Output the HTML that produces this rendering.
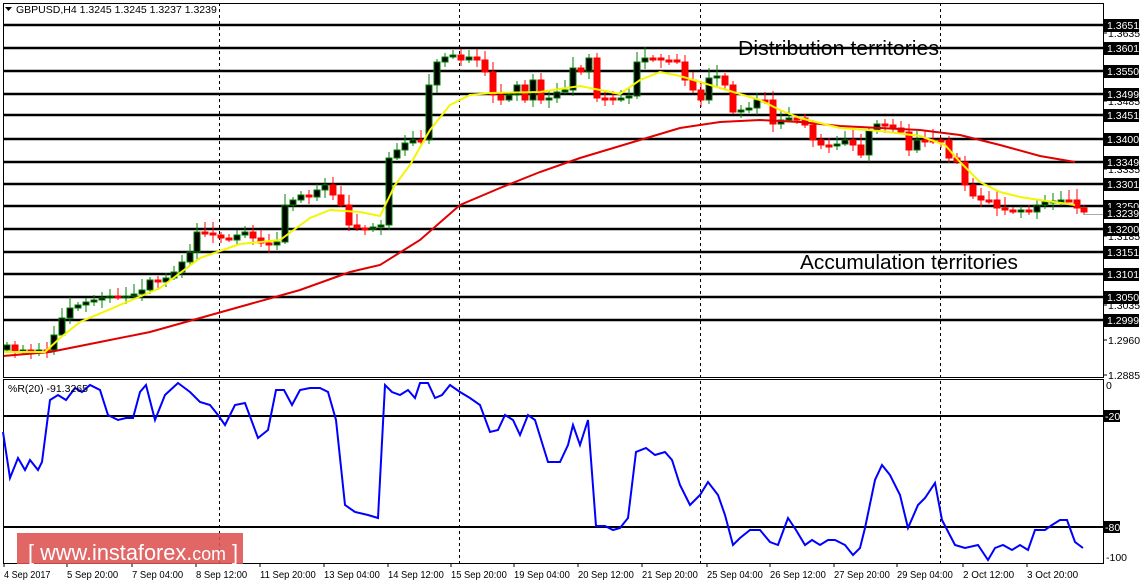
<!DOCTYPE html>
<html><head><meta charset="utf-8"><style>
html,body{margin:0;padding:0;background:#fff;width:1143px;height:585px;overflow:hidden}
svg{display:block}
text{font-family:"Liberation Sans",sans-serif}
</style></head><body>
<svg id="s" width="1143" height="585" xmlns="http://www.w3.org/2000/svg">
<rect width="1143" height="585" fill="#fff"/>
<g id="grid" stroke="#000" stroke-dasharray="3,3" stroke-width="1">
<line x1="219.5" y1="3" x2="219.5" y2="563"/><line x1="459.5" y1="3" x2="459.5" y2="563"/><line x1="700.5" y1="3" x2="700.5" y2="563"/><line x1="940.5" y1="3" x2="940.5" y2="563"/>
</g>
<g id="hl" stroke="#000" stroke-width="2.5"></g>
<g id="cd"></g>
<polyline id="red" fill="none" stroke="#e00000" stroke-width="2" points="3,356 50,352 100,342 150,332 200,318 250,304 300,290 350,272 380,265 420,240 460,205 500,188 540,172 580,158 640,140 680,128 720,122 760,120 800,122 840,126 880,128 920,130 960,135 1000,145 1040,156 1075,162"/>
<polyline id="yel" fill="none" stroke="#f5f500" stroke-width="2" points="3,352 45,352 60,338 80,322 120,305 160,288 200,258 240,244 280,240 310,218 330,210 360,212 380,216 395,185 410,165 430,130 450,105 470,95 490,93 540,92 580,86 600,90 620,94 640,80 660,72 680,76 720,88 760,100 780,110 800,118 840,128 880,131 920,136 945,145 960,162 980,182 1000,192 1020,197 1040,200 1075,205"/>
<line x1="1083" y1="214.5" x2="1103" y2="214.5" stroke="#aaa"/>
<text x="738" y="55" font-size="20.5" textLength="201" lengthAdjust="spacingAndGlyphs">Distribution territories</text>
<text x="800" y="269" font-size="20.5" textLength="218" lengthAdjust="spacingAndGlyphs">Accumulation territories</text>
<text x="16" y="13" font-size="10.5" fill="#000">GBPUSD,H4  1.3245 1.3245 1.3237 1.3239</text>
<path d="M5,7 L12,7 L8.5,11Z" fill="#000"/>
<rect x="3.5" y="3.5" width="1100" height="374" fill="none" stroke="#000"/>
<rect x="3.5" y="379.5" width="1100" height="184" fill="none" stroke="#000"/>
<line x1="3" y1="416" x2="1103" y2="416" stroke="#000" stroke-width="2"/>
<line x1="3" y1="527" x2="1103" y2="527" stroke="#000" stroke-width="2"/>
<polyline id="wr" fill="none" stroke="#0000ff" stroke-width="2" points=""/>
<text x="8" y="392" font-size="10.5">%R(20) -91.3265</text>
<g id="ax" font-size="10.5"></g>
<g id="tx" font-size="10"></g>
<rect x="17" y="533" width="226" height="31" fill="#dd5252" opacity="0.88"/>
<text x="28" y="560" font-size="22" fill="#fff" textLength="210" lengthAdjust="spacingAndGlyphs">[  www.instaforex.<tspan font-size="18">com</tspan> ]</text>
</svg>
<script>
var NS="http://www.w3.org/2000/svg";
function el(p,t,a,tx){var e=document.createElementNS(NS,t);for(var k in a)e.setAttribute(k,a[k]);if(tx!==undefined)e.textContent=tx;p.appendChild(e);return e;}
var hl=document.getElementById('hl'),ax=document.getElementById('ax');
var lv=[[25,"1.3651"],[48,"1.3601"],[71,"1.3550"],[94,"1.3499"],[115,"1.3451"],[139,"1.3400"],[162,"1.3349"],[184,"1.3301"],[206,"1.3250"],[229,"1.3200"],[252,"1.3151"],[274,"1.3101"],[297,"1.3050"],[320,"1.2999"]];
lv.forEach(function(l){el(hl,'line',{x1:3,y1:l[0],x2:1103,y2:l[0]});});
var sm=[[33,"1.3635"],[101,"1.3485"],[169,"1.3335"],[236,"1.3185"],[305,"1.3035"],[340,"1.2960"],[375,"1.2885"]];
sm.forEach(function(l){el(ax,'line',{x1:1103,y1:l[0],x2:1107,y2:l[0],stroke:'#000'});el(ax,'text',{x:1108,y:l[0]+4},l[1]);});
lv.forEach(function(l){el(ax,'rect',{x:1104,y:l[0]-6,width:35,height:13,fill:'#000'});el(ax,'text',{x:1107,y:l[0]+4,fill:'#fff'},l[1]);});
el(ax,'rect',{x:1104,y:208,width:35,height:11,fill:'#000'});el(ax,'text',{x:1107,y:217,fill:'#fff'},"1.3239");
el(ax,'text',{x:1106,y:389},"0");
el(ax,'rect',{x:1104,y:410,width:16,height:12,fill:'#000'});el(ax,'text',{x:1105,y:420,fill:'#fff'},"-20");
el(ax,'rect',{x:1104,y:521,width:16,height:12,fill:'#000'});el(ax,'text',{x:1105,y:531,fill:'#fff'},"-80");
el(ax,'text',{x:1106,y:561},"-100");
var tx=document.getElementById('tx');
[[3,"4 Sep 2017"],[66,"5 Sep 20:00"],[131,"7 Sep 04:00"],[195,"8 Sep 12:00"],[259,"11 Sep 20:00"],[323,"13 Sep 04:00"],[387,"14 Sep 12:00"],[450,"15 Sep 20:00"],[513,"19 Sep 04:00"],[577,"20 Sep 12:00"],[641,"21 Sep 20:00"],[706,"25 Sep 04:00"],[769,"26 Sep 12:00"],[833,"27 Sep 20:00"],[896,"29 Sep 04:00"],[962,"2 Oct 12:00"],[1026,"3 Oct 20:00"]].forEach(function(t){el(tx,'line',{x1:t[0]+1,y1:563,x2:t[0]+1,y2:567,stroke:'#000'});el(tx,'text',{x:t[0]+1,y:578,textLength:(t[1].length*4.65),lengthAdjust:'spacingAndGlyphs'},t[1]);});
var cl=[[7,345],[15,352],[23,350],[31,352],[39,350],[47,350],[54,335],[62,318],[70,308],[78,305],[86,302],[94,300],[102,298],[110,296],[118,298],[126,296],[134,294],[142,290],[150,280],[158,282],[166,278],[174,272],[182,262],[190,252],[197,232],[205,233],[213,235],[221,238],[229,240],[237,235],[245,232],[253,238],[261,243],[269,245],[277,242],[285,205],[293,200],[301,195],[309,197],[317,190],[325,185],[333,195],[341,205],[349,225],[357,228],[365,228],[373,227],[381,225],[389,158],[397,150],[405,143],[413,140],[421,140],[429,85],[437,62],[445,57],[453,55],[461,60],[469,57],[477,60],[485,72],[493,95],[501,100],[509,95],[517,85],[525,100],[533,80],[541,100],[549,98],[557,92],[565,90],[573,68],[581,72],[589,58],[597,98],[605,98],[613,100],[621,98],[629,96],[637,62],[645,58],[653,58],[661,60],[669,60],[677,62],[685,80],[693,90],[701,100],[709,78],[717,76],[725,85],[733,112],[741,110],[749,108],[757,100],[765,100],[773,124],[781,120],[789,118],[797,118],[805,125],[813,140],[821,145],[829,145],[837,144],[845,140],[853,145],[861,155],[869,130],[877,124],[885,125],[893,128],[901,132],[909,150],[917,140],[925,140],[933,140],[941,140],[949,158],[957,162],[965,185],[973,196],[981,200],[989,200],[997,208],[1005,210],[1013,212],[1021,210],[1029,212],[1037,205],[1045,202],[1053,201],[1061,200],[1069,200],[1077,208],[1084,212]];
var cd=document.getElementById('cd');var prev=350;
cl.forEach(function(c,i){var o=prev,cv=c[1];var top=Math.min(o,cv),bot=Math.max(o,cv);var up=cv<o;var col=up?'#008000':'#ff0000';
var h=((i*37)%9)+3;el(cd,'line',{x1:c[0],y1:top-h,x2:c[0],y2:bot+((i*53)%7)+2,stroke:col});
el(cd,'rect',{x:c[0]-3,y:top,width:6,height:Math.max(bot-top,2),fill:up?'#000':'#ff0000',stroke:col});prev=cv;});
document.getElementById('wr').setAttribute('points',"3,432 10,478 18,458 25,470 30,460 38,470 42,462 50,400 58,395 66,400 75,388 82,392 90,385 100,390 108,415 118,420 126,418 133,418 140,392 146,385 155,420 165,395 178,383 190,392 200,402 210,405 218,415 225,425 235,405 245,403 258,438 268,430 276,390 284,390 292,405 300,390 310,388 320,388 328,392 336,420 345,505 355,512 368,515 378,518 385,385 392,392 400,395 408,390 415,398 420,383 428,383 435,398 442,395 450,385 460,392 470,398 480,405 490,432 498,430 505,415 513,420 520,435 528,415 535,420 548,462 560,462 568,445 573,425 580,445 588,420 596,526 605,526 613,530 620,528 628,518 636,452 646,448 655,455 665,452 672,460 680,485 690,505 700,495 708,482 718,495 725,515 733,545 740,538 750,530 760,530 770,542 778,545 788,518 796,530 805,545 812,540 820,545 828,540 835,540 845,545 853,555 860,548 865,528 875,480 882,465 890,475 900,495 908,528 918,505 925,498 935,483 942,520 955,545 965,548 978,545 988,560 995,548 1003,545 1012,550 1020,545 1028,550 1035,530 1045,530 1052,525 1060,520 1067,520 1075,542 1083,548");
</script>
</body></html>
